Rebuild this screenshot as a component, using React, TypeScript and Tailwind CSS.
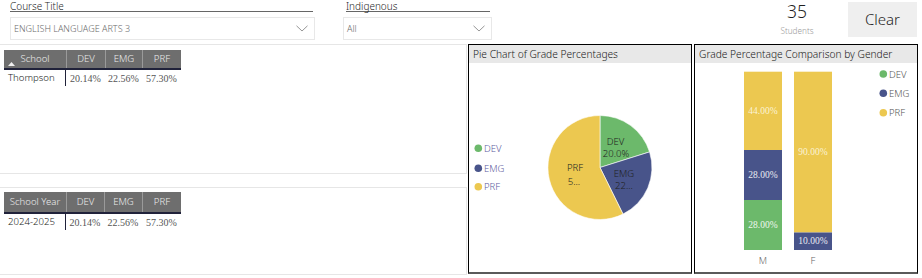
import React from "react";

const GREEN = "#6cb96b";
const NAVY = "#48548a";
const YELLOW = "#ecc850";
const SANS = "'Noto Sans', sans-serif";

function Chevron() {
  return (
    <svg width="12" height="7" viewBox="0 0 12 7" className="shrink-0">
      <path d="M0.5 0.8 L6 6 L11.5 0.8" fill="none" stroke="#8a8a8a" strokeWidth="0.9" />
    </svg>
  );
}

function Dropdown({ value, width }: { value: string; width: string }) {
  return (
    <div className={`${width} mt-[5px] h-[23px] border border-[#e8e8e8] flex items-center justify-between pl-[3px] pr-[6px]`}>
      <span className="text-[9px] text-[#6a6a6a] leading-none">{value}</span>
      <Chevron />
    </div>
  );
}

function TableBlock({
  first,
  row,
  sort,
  headerH,
  widths,
}: {
  first: string;
  row: string;
  sort?: boolean;
  headerH: string;
  widths: string[];
}) {
  const heads = [first, "DEV", "EMG", "PRF"];
  const vals = [row, "20.14%", "22.56%", "57.30%"];
  return (
    <div className="flex flex-col w-max">
      <div className={`flex ${headerH} bg-[#6e6e6e] border-b-2 border-[#20223a]`}>
        {heads.map((h, i) => (
          <div
            key={h}
            className={`${widths[i]} relative flex items-center justify-center text-[9.6px] text-[#ececec] ${i > 0 ? "border-l border-[#9a9a9a]" : ""}`}
          >
            {h}
            {sort && i === 0 && (
              <svg width="7" height="4" viewBox="0 0 7 4" className="absolute left-[4px] bottom-[2px]">
                <path d="M0 4 L3.5 0 L7 4 Z" fill="#f0f0f0" />
              </svg>
            )}
          </div>
        ))}
      </div>
      <div className="flex h-[16px]">
        {vals.map((v, i) => (
          <div
            key={i}
            className={`${widths[i]} flex items-center ${i === 0 ? "pl-[4px] text-[9.6px] text-[#222] border-r border-[#20223a]" : "justify-center text-[10px] text-[#555] [font-family:'Liberation_Serif',serif] font-normal"}`}
          >
            {v}
          </div>
        ))}
      </div>
    </div>
  );
}

function PieChart() {
  return (
    <svg width="222" height="208" viewBox="0 0 222 208">
      <path d="M131,104.5 L131,52.5 A52,52 0 0 1 180.6,88.9 Z" fill={GREEN} stroke="#fff" strokeWidth="0.6" />
      <path d="M131,104.5 L180.6,88.9 A52,52 0 0 1 154.0,151.1 Z" fill={NAVY} stroke="#fff" strokeWidth="0.6" />
      <path d="M131,104.5 L154.0,151.1 A52,52 0 1 1 131,52.5 Z" fill={YELLOW} stroke="#fff" strokeWidth="0.6" />
      <g fontFamily={SANS} fontWeight="300" fontSize="9.5" fill="#222" textAnchor="middle" dominantBaseline="central">
        <text x="146.5" y="78">DEV</text>
        <text x="147" y="90">20.0%</text>
        <text x="155" y="110">EMG</text>
        <text x="155" y="122">22...</text>
        <text x="106" y="104">PRF</text>
        <text x="105" y="118">5...</text>
      </g>
      <g fontFamily={SANS} fontWeight="300" fontSize="9.5" fill="#5d5a9e" dominantBaseline="central">
        <circle cx="9.3" cy="85.3" r="3.8" fill={GREEN} />
        <text x="15" y="85.3">DEV</text>
        <circle cx="9.3" cy="105.3" r="3.8" fill={NAVY} />
        <text x="15" y="105.3">EMG</text>
        <circle cx="9.3" cy="123.7" r="3.8" fill={YELLOW} />
        <text x="15" y="123.7">PRF</text>
      </g>
    </svg>
  );
}

function BarChart() {
  return (
    <svg width="222" height="208" viewBox="0 0 222 208">
      <rect x="49" y="8.7" width="38" height="78.3" fill={YELLOW} />
      <rect x="49" y="87" width="38" height="50" fill={NAVY} />
      <rect x="49" y="137" width="38" height="50" fill={GREEN} />
      <rect x="99" y="8.7" width="38" height="160.8" fill={YELLOW} />
      <rect x="99" y="169.5" width="38" height="17.5" fill={NAVY} />
      <g fontFamily="'Liberation Serif', serif" fontSize="9.5" textAnchor="middle" dominantBaseline="central">
        <text x="68" y="48" fill="#fbf3d6">44.00%</text>
        <text x="68" y="112" fill="#e8eaf2">28.00%</text>
        <text x="68" y="162" fill="#eef6ee">28.00%</text>
        <text x="118" y="89" fill="#fbf3d6">90.00%</text>
        <text x="118" y="178.3" fill="#e8eaf2">10.00%</text>
      </g>
      <g fontFamily={SANS} fontWeight="300" fontSize="9.5" fill="#666" textAnchor="middle" dominantBaseline="central">
        <text x="68" y="197.5">M</text>
        <text x="118" y="197.5">F</text>
      </g>
      <g fontFamily={SANS} fontWeight="300" fontSize="9.5" fill="#555" dominantBaseline="central">
        <circle cx="188.3" cy="11" r="3.8" fill={GREEN} />
        <text x="194" y="11">DEV</text>
        <circle cx="188.3" cy="30.3" r="3.8" fill={NAVY} />
        <text x="194" y="30.3">EMG</text>
        <circle cx="188.3" cy="49.7" r="3.8" fill={YELLOW} />
        <text x="194" y="49.7">PRF</text>
      </g>
    </svg>
  );
}

function ChartPanel({ title, children }: { title: string; children: React.ReactNode }) {
  return (
    <div className="w-[224px] h-[230px] flex flex-col border border-black border-b-2 border-b-[#5a5a5a]">
      <div className="h-[18px] bg-[#e8e8e8] pl-[4px] text-[10.2px] leading-[18px] text-[#1a1a1a]">{title}</div>
      {children}
    </div>
  );
}

export default function App() {
  return (
    <div className="w-[922px] h-[278px] bg-white overflow-hidden [font-family:'Noto_Sans',sans-serif] font-light text-[#1f1f1f]">
      {/* top bar */}
      <div className="flex h-[44px]">
        <div className="ml-[10px] w-[305px] flex flex-col">
          <div className="w-[303px] h-[12px] text-[10px] leading-[13px] border-b border-[#666]">Course Title</div>
          <Dropdown value="ENGLISH LANGUAGE ARTS 3" width="w-[305px]" />
        </div>
        <div className="ml-[28px] w-[149px] flex flex-col">
          <div className="ml-[3px] w-[144px] h-[12px] text-[10px] leading-[13px] border-b border-[#666]">Indigenous</div>
          <Dropdown value="All" width="w-[149px]" />
        </div>
        <div className="ml-[275px] w-[60px] flex flex-col items-center">
          <div className="text-[17.5px] leading-[18px] mt-[2px]">35</div>
          <div className="text-[8.2px] text-[#9a9a9a] mt-[7px] leading-none">Students</div>
        </div>
        <div className="ml-[21px] mt-[2px] w-[69px] h-[35px] bg-[#efefef] flex items-center justify-center text-[15px]">
          Clear
        </div>
      </div>
      {/* body */}
      <div className="flex">
        <div className="w-[467px] flex flex-col">
          <div className="h-[130px] border-y border-r border-[#e6e6e6] pl-[4px] pt-[5px]">
            <TableBlock first="School" row="Thompson" sort headerH="h-[20px]" widths={["w-[62px]", "w-[39px]", "w-[37px]", "w-[39px]"]} />
          </div>
          <div className="mt-[13px] h-[88px] border-y border-r border-[#e6e6e6] pl-[4px] pt-[4px]">
            <TableBlock first="School Year" row="2024-2025" headerH="h-[22px]" widths={["w-[62px]", "w-[38px]", "w-[38px]", "w-[39px]"]} />
          </div>
        </div>
        <div className="ml-[1px]">
          <ChartPanel title="Pie Chart of Grade Percentages">
            <PieChart />
          </ChartPanel>
        </div>
        <div className="ml-[2px]">
          <ChartPanel title="Grade Percentage Comparison by Gender">
            <BarChart />
          </ChartPanel>
        </div>
      </div>
    </div>
  );
}
